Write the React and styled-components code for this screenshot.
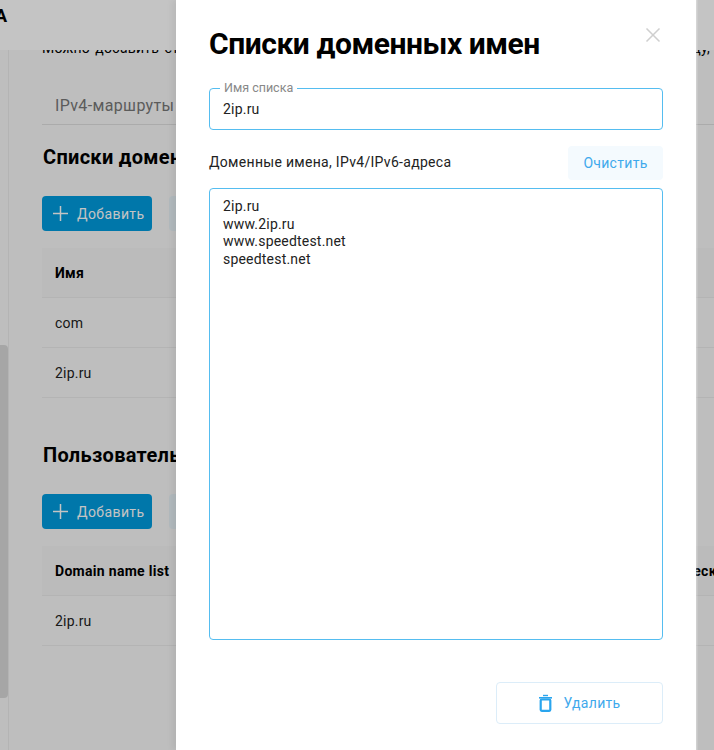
import React from "react";
import styled, { createGlobalStyle } from "styled-components";

const Global = createGlobalStyle`
  html, body { margin: 0; padding: 0; height: 100%; }
  body { font-family: Roboto, "Liberation Sans", sans-serif; font-size: 14px; letter-spacing: 0.2px; color: #000; background: #f8f8f8; }
  * { box-sizing: border-box; }
`;

const Screen = styled.div`
  position: relative;
  width: 714px;
  height: 750px;
  overflow: hidden;
  display: flex;
  background: #f8f8f8;
`;

const Rail = styled.aside`
  flex: 0 0 9px;
  height: 100%;
  border-right: 1px solid #ebebeb;
  padding-top: 345px;
`;

const Thumb = styled.div`
  width: 8px;
  height: 353px;
  background: #d8d9d9;
  border-radius: 0 4px 4px 0;
`;

const TopBar = styled.header`
  position: absolute;
  inset: 0 0 auto 0;
  height: 50px;
  background: #ffffff;
  z-index: 1;
  overflow: hidden;
`;

const Logo = styled.span`
  display: block;
  margin: 5px 0 0 -5px;
  font-size: 18px;
  font-weight: 700;
  line-height: 22px;
`;

const Page = styled.main`
  flex: 1;
  min-width: 0;
  padding: 40px 0 0 33px;
  overflow: hidden;
`;

const Intro = styled.p`
  margin: 0;
  width: 668px;
  font-size: 14px;
  line-height: 16px;
  white-space: nowrap;
  text-align: justify;
  text-align-last: justify;
`;

const RouteSelect = styled.div`
  margin-top: 26px;
  height: 43px;
  padding: 4px 13px 0;
  display: flex;
  align-items: center;
  font-size: 16px;
  letter-spacing: 0.35px;
  color: #777;
  border-bottom: 1px solid #dfdfdf;
`;

const SectionTitle = styled.h2`
  margin: ${(p) => p.$top}px 0 0 1px;
  font-size: 20px;
  line-height: 24px;
  font-weight: 700;
  letter-spacing: 0.3px;
  white-space: nowrap;
`;

const Actions = styled.div`
  display: flex;
  gap: 17px;
  margin-top: 27px;
`;

const PrimaryButton = styled.div`
  width: 110px;
  height: 35px;
  display: flex;
  align-items: center;
  gap: 8px;
  padding-left: 10px;
  background: #009bdd;
  color: #fff;
  border-radius: 4px;
  font-size: 14px;
  letter-spacing: 0.4px;
`;

const GhostButton = styled.div`
  width: 120px;
  height: 35px;
  background: #e8f2f8;
  border-radius: 4px;
`;

const Table = styled.div`
  margin-top: 17px;
  width: 720px;
`;

const HeadRow = styled.div`
  display: flex;
  height: 50px;
  align-items: center;
  padding-left: 13px;
  background: #f4f4f4;
  border-bottom: 1px solid #eaeaea;
  font-weight: 700;
  letter-spacing: 0.3px;
  white-space: nowrap;
`;

const HeadCell = styled.span`
  flex: 0 0 ${(p) => p.$width}px;
`;

const Row = styled.div`
  height: 50px;
  display: flex;
  align-items: center;
  padding-left: 13px;
  border-bottom: 1px solid #eaeaea;
  color: #222;
`;

const Scrim = styled.div`
  position: absolute;
  inset: 0;
  background: rgba(0, 0, 0, 0.23);
  z-index: 2;
`;

const Drawer = styled.section`
  position: absolute;
  top: 0;
  bottom: 0;
  left: 176px;
  width: 520px;
  z-index: 3;
  background: #fff;
  padding: 0 33px;
  display: flex;
  flex-direction: column;
  box-shadow: -4px 0 6px rgba(0, 0, 0, 0.06), 1.5px 0 0 rgba(255, 255, 255, 0.3);
`;

const DrawerHead = styled.div`
  height: 88px;
  padding-top: 26px;
  display: flex;
  justify-content: space-between;
`;

const DrawerTitle = styled.h1`
  margin: 0;
  font-size: 30px;
  line-height: 36px;
  font-weight: 700;
  letter-spacing: -0.45px;
`;

const Close = styled.button`
  border: 0;
  background: none;
  padding: 0;
  margin: 2px 2px 0 0;
  width: 16px;
  height: 16px;
  color: #cfcfcf;
  display: block;
`;

const Field = styled.div`
  position: relative;
  height: 42px;
  display: flex;
  align-items: center;
  padding: 0 13px;
  border: 1px solid #55bdf0;
  border-radius: 4px;
  font-size: 14px;
  color: #222;
`;

const FieldLabel = styled.label`
  position: absolute;
  top: -8px;
  left: 10px;
  padding: 0 4px;
  background: #fff;
  font-size: 12.5px;
  line-height: 13px;
  letter-spacing: 0;
  color: #888;
`;

const ListHead = styled.div`
  margin-top: 16px;
  height: 34px;
  display: flex;
  justify-content: space-between;
  font-size: 14px;
  color: #222;
  letter-spacing: 0.3px;
`;

const ListLabel = styled.span`
  line-height: 32px;
`;

const ClearButton = styled.button`
  width: 95px;
  height: 34px;
  border: 0;
  border-radius: 4px;
  background: #f4fafe;
  color: #3fa9ec;
  font: 400 14px Roboto, sans-serif;
  letter-spacing: 0.3px;
`;

const ListBox = styled.div`
  margin-top: 8px;
  height: 452px;
  padding: 9px 13px;
  border: 1px solid #55bdf0;
  border-radius: 4px;
  font-size: 14px;
  line-height: 17.5px;
  color: #222;
  white-space: pre-line;
`;

const DrawerFoot = styled.div`
  margin-top: 42px;
  display: flex;
  justify-content: flex-end;
`;

const DeleteButton = styled.button`
  width: 167px;
  height: 42px;
  display: flex;
  align-items: center;
  justify-content: center;
  gap: 12px;
  padding: 0;
  background: #fff;
  border: 1px solid #dcedf9;
  border-radius: 4px;
  color: #3fa9ec;
  font: 400 14px Roboto, sans-serif;
  letter-spacing: 0.3px;
`;

const TrashGlyph = styled.svg`
  color: #2aa5ee;
`;

const PlusIcon = () => (
  <svg width="17" height="17" viewBox="0 0 17 17" fill="none" stroke="currentColor" strokeWidth="1.5">
    <path d="M8.5 1v15M1 8.5h15" />
  </svg>
);

const CloseIcon = () => (
  <svg width="16" height="16" viewBox="0 0 16 16" fill="none" stroke="currentColor" strokeWidth="1.5">
    <path d="M1.5 0.5l13 13M14.5 0.5l-13 13" />
  </svg>
);

const TrashIcon = () => (
  <TrashGlyph width="13" height="18" viewBox="0 0 13 18" fill="none" stroke="currentColor" strokeWidth="2">
    <path d="M0 3.8h13" strokeWidth="1.6" />
    <path d="M4 1.5h5" strokeWidth="1.4" />
    <rect x="1.7" y="5.5" width="9.6" height="11.3" rx="1" strokeWidth="2.2" />
  </TrashGlyph>
);

export default function App() {
  return (
    <Screen>
      <Global />
      <TopBar>
        <Logo>A</Logo>
      </TopBar>
      <Rail>
        <Thumb />
      </Rail>
      <Page>
        <Intro>Можно добавить статические маршруты для всех IP-адресов и доменных имён в любую среду,</Intro>
        <RouteSelect>IPv4-маршруты</RouteSelect>
        <SectionTitle $top={20}>Списки доменных имён</SectionTitle>
        <Actions>
          <PrimaryButton>
            <PlusIcon />
            Добавить
          </PrimaryButton>
          <GhostButton />
        </Actions>
        <Table>
          <HeadRow>Имя</HeadRow>
          <Row>com</Row>
          <Row>2ip.ru</Row>
        </Table>
        <SectionTitle $top={45}>Пользовательские маршруты</SectionTitle>
        <Actions>
          <PrimaryButton>
            <PlusIcon />
            Добавить
          </PrimaryButton>
          <GhostButton />
        </Actions>
        <Table>
          <HeadRow>
            <HeadCell $width={590}>Domain name list</HeadCell>
            <span>Статические</span>
          </HeadRow>
          <Row>2ip.ru</Row>
        </Table>
      </Page>
      <Scrim />
      <Drawer>
        <DrawerHead>
          <DrawerTitle>Списки доменных имен</DrawerTitle>
          <Close aria-label="Закрыть">
            <CloseIcon />
          </Close>
        </DrawerHead>
        <Field>
          <FieldLabel>Имя списка</FieldLabel>
          2ip.ru
        </Field>
        <ListHead>
          <ListLabel>Доменные имена, IPv4/IPv6-адреса</ListLabel>
          <ClearButton>Очистить</ClearButton>
        </ListHead>
        <ListBox>{"2ip.ru\nwww.2ip.ru\nwww.speedtest.net\nspeedtest.net"}</ListBox>
        <DrawerFoot>
          <DeleteButton>
            <TrashIcon />
            Удалить
          </DeleteButton>
        </DrawerFoot>
      </Drawer>
    </Screen>
  );
}
